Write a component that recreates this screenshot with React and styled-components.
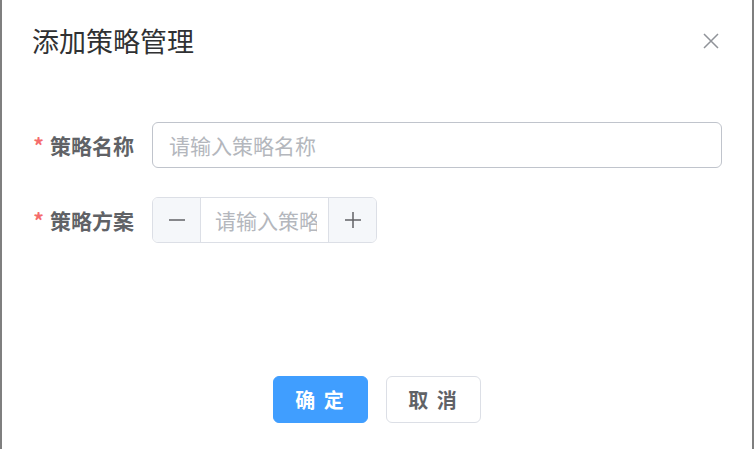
import React from "react";
import styled, { createGlobalStyle } from "styled-components";

const Global = createGlobalStyle`
  html, body { margin: 0; padding: 0; }
  body {
    background: #7f7f7f;
    font-family: "Noto Sans CJK SC", "Noto Sans", sans-serif;
    overflow: hidden;
  }
`;

const Overlay = styled.div`
  width: 754px;
  height: 449px;
  display: flex;
  justify-content: center;
`;

const Dialog = styled.div`
  width: 750px;
  height: 449px;
  background: #ffffff;
  display: flex;
  flex-direction: column;
`;

const Header = styled.div`
  display: flex;
  align-items: center;
  justify-content: space-between;
  padding: 21px 33px 0 30px;
  height: 40px;
`;

const Title = styled.div`
  font-size: 27px;
  line-height: 40px;
  color: #303133;
`;

const Close = styled.button`
  border: 0;
  background: transparent;
  padding: 0;
  width: 16px;
  height: 16px;
  display: flex;
  cursor: pointer;
`;

const Body = styled.div`
  padding: 61px 30px 0 30px;
  display: flex;
  flex-direction: column;
  gap: 29px;
`;

const Row = styled.div`
  display: flex;
  align-items: center;
  height: 46px;
`;

const Label = styled.label`
  width: 120px;
  padding-right: 18px;
  box-sizing: border-box;
  text-align: right;
  font-size: 21px;
  font-weight: 700;
  color: #606266;
  white-space: nowrap;
`;

const Star = styled.span`
  color: #f56c6c;
  margin-right: 6px;
  font-weight: 700;
`;

const TextInput = styled.input`
  flex: 1;
  height: 46px;
  box-sizing: border-box;
  border: 1px solid #c0c4cc;
  border-radius: 6px;
  padding: 0 16px;
  font-size: 21px;
  font-family: inherit;
  color: #606266;
  outline: none;
  &::placeholder { color: #b4b7bd; }
`;

const NumberBox = styled.div`
  width: 225px;
  height: 46px;
  box-sizing: border-box;
  border: 1px solid #dcdfe6;
  border-radius: 6px;
  display: flex;
  overflow: hidden;
`;

const Step = styled.span`
  width: 47px;
  flex: none;
  background: #f5f7fa;
  display: flex;
  align-items: center;
  justify-content: center;
  border-left: ${(p) => (p.$side === "right" ? "1px solid #dcdfe6" : "0")};
  border-right: ${(p) => (p.$side === "left" ? "1px solid #dcdfe6" : "0")};
`;

const MidInput = styled.input`
  flex: 1;
  min-width: 0;
  border: 0;
  padding: 0 11px 0 14px;
  font-size: 21px;
  font-family: inherit;
  outline: none;
  &::placeholder { color: #b4b7bd; }
`;

const Footer = styled.div`
  margin-top: auto;
  padding-bottom: 26px;
  display: flex;
  justify-content: center;
  gap: 18px;
`;

const Button = styled.button`
  width: 95px;
  height: 47px;
  border-radius: 6px;
  font-size: 20px;
  font-weight: 700;
  font-family: inherit;
  letter-spacing: 2px;
  white-space: pre;
  cursor: pointer;
  border: 1px solid ${(p) => (p.$primary ? "#409eff" : "#dcdfe6")};
  background: ${(p) => (p.$primary ? "#409eff" : "#ffffff")};
  color: ${(p) => (p.$primary ? "#ffffff" : "#606266")};
`;

const Minus = () => (
  <svg width="16" height="16" viewBox="0 0 16 16">
    <line x1="0" y1="8" x2="16" y2="8" stroke="#606266" strokeWidth="1.5" />
  </svg>
);
const Plus = () => (
  <svg width="16" height="16" viewBox="0 0 16 16">
    <line x1="0" y1="8" x2="16" y2="8" stroke="#606266" strokeWidth="1.5" />
    <line x1="8" y1="0" x2="8" y2="16" stroke="#606266" strokeWidth="1.5" />
  </svg>
);

export default function App() {
  return (
    <>
      <Global />
      <Overlay>
        <Dialog>
          <Header>
            <Title>添加策略管理</Title>
            <Close aria-label="关闭">
              <svg width="16" height="16" viewBox="0 0 16 16">
                <path d="M1 1 L15 15 M15 1 L1 15" stroke="#909399" strokeWidth="1.5" fill="none" />
              </svg>
            </Close>
          </Header>
          <Body>
            <Row>
              <Label><Star>*</Star>策略名称</Label>
              <TextInput placeholder="请输入策略名称" />
            </Row>
            <Row>
              <Label><Star>*</Star>策略方案</Label>
              <NumberBox>
                <Step $side="left"><Minus /></Step>
                <MidInput placeholder="请输入策略名称" />
                <Step $side="right"><Plus /></Step>
              </NumberBox>
            </Row>
          </Body>
          <Footer>
            <Button $primary>确 定</Button>
            <Button>取 消</Button>
          </Footer>
        </Dialog>
      </Overlay>
    </>
  );
}
